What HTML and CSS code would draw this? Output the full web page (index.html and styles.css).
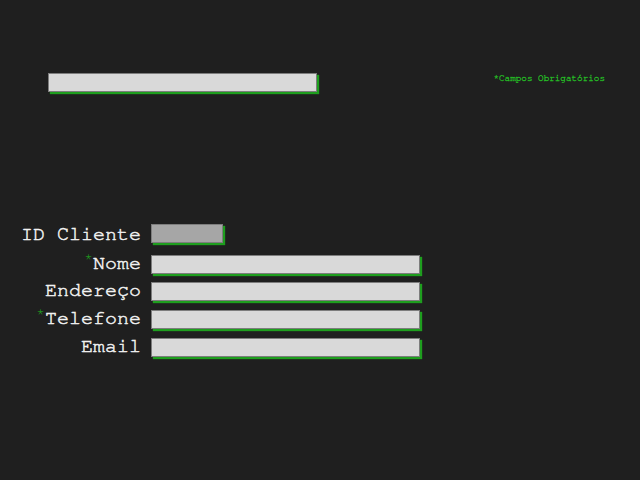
FILE: index.html
```html
<!DOCTYPE html>
<html lang="pt">
<head>
<meta charset="utf-8">
<title>Cadastro de Cliente</title>
<link rel="stylesheet" href="styles.css">
</head>
<body>
<header class="top">
  <input class="field" type="text" aria-label="Pesquisa">
  <span class="note">*Campos Obrigatórios</span>
</header>
<form class="form">
  <label class="label" for="id">ID Cliente</label>
  <input class="field field-id" id="id" type="text" disabled>
  <label class="label" for="nome"><span class="req">*</span>Nome</label>
  <input class="field" id="nome" type="text">
  <label class="label" for="end">Endereço</label>
  <input class="field" id="end" type="text">
  <label class="label" for="tel"><span class="req">*</span>Telefone</label>
  <input class="field" id="tel" type="text">
  <label class="label" for="email">Email</label>
  <input class="field" id="email" type="text">
</form>
</body>
</html>
```
FILE: styles.css
```css
html, body {
  margin: 0;
  padding: 0;
  background: #1f1f1f;
  height: 100%;
}
body {
  font-family: "Nimbus Mono PS", "Nimbus Mono L", "FreeMono", "Courier", "Liberation Mono", monospace;
  color: #f0f0f0;
}
.top {
  display: flex;
  align-items: flex-start;
  padding: 73px 0 0 48px;
}
.field {
  box-sizing: border-box;
  width: 269px;
  height: 19px;
  margin: 0;
  padding: 0 3px;
  border: 1px solid #7d7d7d;
  background: #d9d9d9;
  box-shadow: 2px 2px 1px #1e9e1e;
  font: 12px "Liberation Mono", monospace;
  outline: none;
}
.note {
  margin-left: auto;
  margin-right: 35px;
  margin-top: 1px;
  font-size: 9.3px;
  color: #25c025;
  -webkit-text-stroke: 0.3px #25c025;
}
.form {
  display: grid;
  grid-template-columns: 141px max-content;
  column-gap: 10px;
  row-gap: 8.7px;
  align-items: center;
  margin-top: 132px;
}
.label {
  text-align: right;
  font-size: 20px;
  line-height: 17px;
  height: 19px;
  color: #f2f2f2;
  -webkit-text-stroke: 0.5px #f2f2f2;
}
.field-id {
  width: 72px;
  background: #a6a6a6;
  margin-bottom: 3px;
}
.req {
  font-size: 15px;
  line-height: 0;
  color: #1e9e1e;
  -webkit-text-stroke: 0;
  vertical-align: 5px;
}
```
